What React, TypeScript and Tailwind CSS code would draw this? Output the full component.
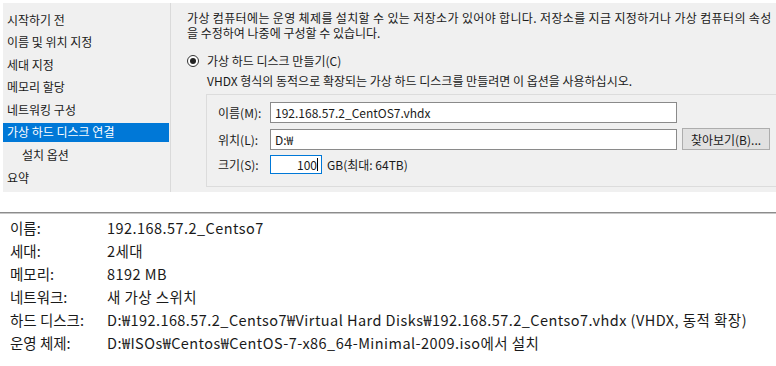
import React from 'react'

const steps = [
  { label: '시작하기 전' },
  { label: '이름 및 위치 지정' },
  { label: '세대 지정' },
  { label: '메모리 할당' },
  { label: '네트워킹 구성' },
  { label: '가상 하드 디스크 연결', active: true },
  { label: '설치 옵션', sub: true },
  { label: '요약' },
]

const summary = [
  ['이름:', '192.168.57.2_Centso7'],
  ['세대:', '2세대'],
  ['메모리:', '8192 MB'],
  ['네트워크:', '새 가상 스위치'],
  ['하드 디스크:', 'D:₩192.168.57.2_Centso7₩Virtual Hard Disks₩192.168.57.2_Centso7.vhdx (VHDX, 동적 확장)'],
  ['운영 체제:', 'D:₩ISOs₩Centos₩CentOS-7-x86_64-Minimal-2009.iso에서 설치'],
]

const font = { fontFamily: '"Noto Sans CJK KR", "Noto Sans", sans-serif' }

export default function App() {
  return (
    <div className="w-[776px] h-[366px] bg-white overflow-hidden text-[#1a1a1a]" style={font}>
      {/* Wizard capture */}
      <div className="ml-[3px] mt-[3px] h-[189px] bg-[#f0f0f0] flex">
        {/* Step list */}
        <div className="w-[166px] pt-[7px] flex flex-col gap-[3.6px] text-[12px]">
          {steps.map((s) => (
            <div
              key={s.label}
              className={`h-[19px] flex items-center ${s.sub ? 'pl-[19px]' : 'pl-[4px]'} ${
                s.active ? 'bg-[#0078d7] text-white' : ''
              }`}
            >
              {s.label}
            </div>
          ))}
        </div>
        <div className="w-px mx-[1px] bg-[#dadada]" />

        {/* Page body */}
        <div className="flex-1 overflow-hidden pl-[15px] text-[12px] leading-[15px]">
          <div className="mt-[7px] whitespace-nowrap tracking-[0.35px]">
            가상 컴퓨터에는 운영 체제를 설치할 수 있는 저장소가 있어야 합니다. 저장소를 지금 지정하거나 가상 컴퓨터의 속성
          </div>
          <div className="whitespace-nowrap">을 수정하여 나중에 구성할 수 있습니다.</div>

          <div className="mt-[13px] flex items-center gap-[8px]">
            <span className="w-[12px] h-[12px] rounded-full border border-[#333] bg-white flex items-center justify-center">
              <span className="w-[6px] h-[6px] rounded-full bg-[#222]" />
            </span>
            <span>가상 하드 디스크 만들기(C)</span>
          </div>
          <p className="mt-[5px] ml-[20px]">VHDX 형식의 동적으로 확장되는 가상 하드 디스크를 만들려면 이 옵션을 사용하십시오.</p>

          <div className="mt-[6px] ml-[19px] -mr-[10px] h-[93px] border border-[#dcdcdc] pl-[11px] pt-[7px] flex flex-col gap-[5px]">
            <div className="flex items-center">
              <span className="w-[52px]">이름(M):</span>
              <div className="w-[407px] h-[21px] border border-[#8a8a8a] bg-white px-[4px] flex items-center">
                192.168.57.2_CentOS7.vhdx
              </div>
            </div>
            <div className="flex items-center">
              <span className="w-[52px]">위치(L):</span>
              <div className="w-[407px] h-[21px] border border-[#8a8a8a] bg-white px-[4px] flex items-center">D:₩</div>
              <button className="ml-[5px] w-[88px] h-[22px] border border-[#adadad] bg-[#e1e1e1] flex items-center justify-center">
                찾아보기(B)...
              </button>
            </div>
            <div className="flex items-center">
              <span className="w-[52px]">크기(S):</span>
              <div className="w-[52px] h-[19px] border border-[#0078d7] bg-white pr-[3px] flex items-center justify-end">
                100<span className="w-px h-[13px] bg-black" />
              </div>
              <span className="ml-[5px]">GB(최대: 64TB)</span>
            </div>
          </div>
        </div>
      </div>

      {/* Summary */}
      <div className="mt-[20px] h-[2px] border-t border-[#8c8c8c] border-b-[#c8c8c8] border-b" />
      <div className="pl-[10px] pt-[2px] flex flex-col text-[14.5px]">
        {summary.map(([k, v]) => (
          <div key={k} className="h-[23px] flex items-center">
            <span className="w-[97px]">{k}</span>
            <span className="whitespace-nowrap tracking-[0.45px]">{v}</span>
          </div>
        ))}
      </div>
    </div>
  )
}
